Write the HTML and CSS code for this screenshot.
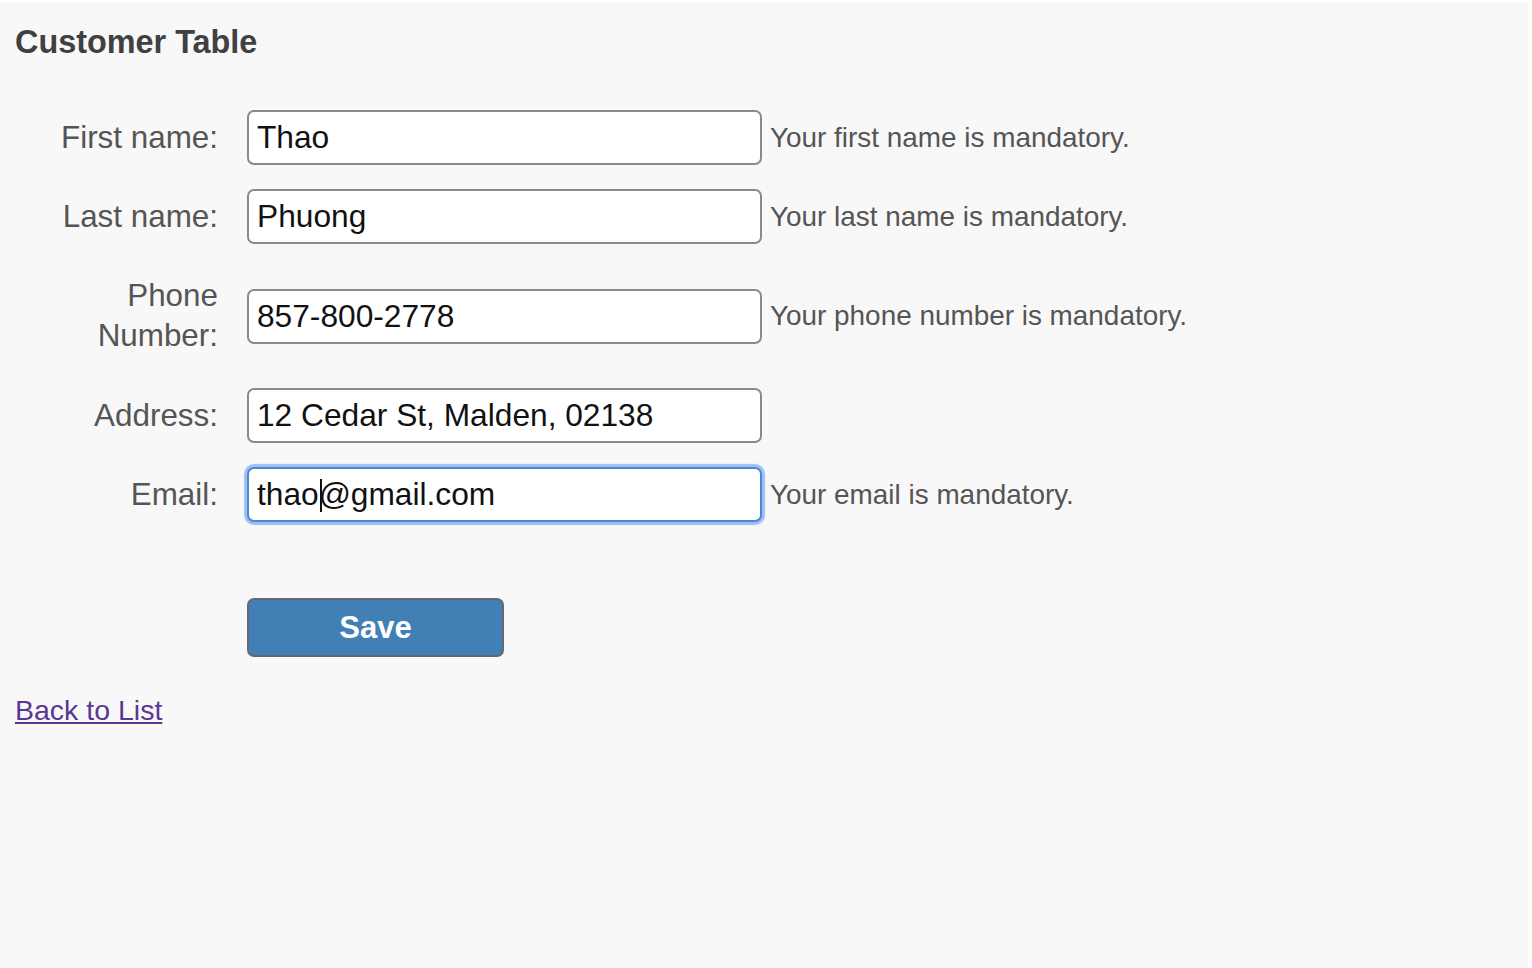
FILE: index.html
```html
<!DOCTYPE html>
<html lang="en">
<head>
<meta charset="utf-8">
<title>Customer Table</title>
<link rel="stylesheet" href="styles.css">
</head>
<body>
<div class="page">
  <h1 class="title">Customer Table</h1>
  <form class="form">
    <label class="label" for="fn">First name:</label>
    <input class="field" id="fn" type="text" value="Thao">
    <span class="msg">Your first name is mandatory.</span>

    <label class="label" for="ln">Last name:</label>
    <input class="field" id="ln" type="text" value="Phuong">
    <span class="msg">Your last name is mandatory.</span>

    <label class="label label-tall" for="ph">Phone<br>Number:</label>
    <input class="field" id="ph" type="text" value="857-800-2778">
    <span class="msg">Your phone number is mandatory.</span>

    <label class="label" for="ad">Address:</label>
    <input class="field" id="ad" type="text" value="12 Cedar St, Malden, 02138">
    <span class="msg"></span>

    <label class="label" for="em">Email:</label>
    <span class="field-wrap">
      <input class="field field-focus" id="em" type="text" value="thao@gmail.com">
      <span class="caret"></span>
    </span>
    <span class="msg">Your email is mandatory.</span>
  </form>
  <div class="actions">
    <button class="btn" type="button">Save</button>
  </div>
  <a class="back" href="#">Back to List</a>
</div>
</body>
</html>
```

FILE: styles.css
```css
html, body {
  margin: 0;
  padding: 0;
  background: #ffffff;
}

.page {
  margin: 2px 4px 0 0;
  min-height: 966px;
  background: #f8f8f8;
  padding: 20px 15px 0 15px;
  box-sizing: border-box;
  font-family: "Liberation Sans", Arial, Helvetica, sans-serif;
}

.title {
  margin: 0;
  font-size: 32.4px;
  line-height: 40px;
  font-weight: bold;
  color: #404040;
}

.form {
  margin-top: 48px;
  display: grid;
  grid-template-columns: 203px 515px auto;
  column-gap: 29px;
  row-gap: 24px;
  align-items: center;
}

.label {
  font-size: 31.4px;
  line-height: 40px;
  color: #555555;
  text-align: right;
}

.label-tall {
  padding: 8px 0;
}

.field-wrap {
  position: relative;
  display: block;
}

.field {
  display: block;
  width: 515px;
  height: 55px;
  box-sizing: border-box;
  margin: 0;
  padding: 0 8px;
  border: 2px solid #8a8a8a;
  border-radius: 7px;
  background: #ffffff;
  font-family: "Liberation Sans", Arial, Helvetica, sans-serif;
  font-size: 31.7px;
  color: #111111;
  outline: none;
}

.field-focus {
  border-color: #4f86d8;
  box-shadow: 0 0 1px 3px #9cc0f3;
}

.caret {
  position: absolute;
  left: 73px;
  top: 12px;
  width: 2px;
  height: 33px;
  background: #111111;
}

.msg {
  margin-left: -21px;
  font-size: 27.9px;
  line-height: 36px;
  color: #555555;
  white-space: nowrap;
}

.actions {
  margin-top: 76px;
  padding-left: 232px;
}

.btn {
  display: block;
  width: 257px;
  height: 59px;
  box-sizing: border-box;
  margin: 0;
  border: 2px solid #5f6a75;
  border-radius: 7px;
  background: #417fb5;
  color: #ffffff;
  font-family: "Liberation Sans", Arial, Helvetica, sans-serif;
  font-size: 31px;
  font-weight: bold;
  cursor: pointer;
}

.back {
  display: inline-block;
  margin-top: 35px;
  font-size: 28.5px;
  line-height: 36px;
  color: #5b3794;
  text-decoration: underline;
}
```
